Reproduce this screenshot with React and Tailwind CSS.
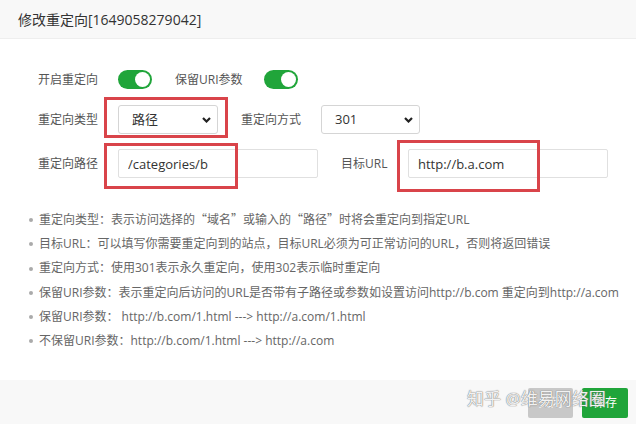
import React, { useState } from "react";

const font = { fontFamily: '"Open Sans", "Noto Sans CJK SC", sans-serif' };

const Toggle = ({ on, onChange }) => (
  <button
    type="button"
    onClick={() => onChange(!on)}
    className={`relative w-[34px] h-[19px] rounded-full ${on ? "bg-[#20a53a]" : "bg-[#ccc]"}`}
  >
    <span
      className={`absolute top-[2px] w-[15px] h-[15px] rounded-full bg-white ${on ? "left-[17px]" : "left-[2px]"}`}
    />
  </button>
);

const Chevron = () => (
  <svg width="9" height="6" viewBox="0 0 9 6" className="shrink-0">
    <path d="M1 1l3.5 3.5L8 1" fill="none" stroke="#222" strokeWidth="2.2" />
  </svg>
);

const Select = ({ value, width }) => (
  <div
    className={`flex items-center justify-between h-[29px] border border-[#d5d5d5] rounded-[3px] bg-white pl-[13px] pr-[6px] text-[13px] text-[#333] ${width}`}
  >
    <span>{value}</span>
    <Chevron />
  </div>
);

const Input = ({ value, onChange }) => (
  <input
    value={value}
    onChange={(e) => onChange(e.target.value)}
    className="w-[200px] h-[29px] border border-[#e0e0e0] rounded-[2px] px-[9px] text-[13px] text-[#333] outline-none"
  />
);

const notes = [
  "重定向类型：表示访问选择的“域名”或输入的“路径”时将会重定向到指定URL",
  "目标URL：可以填写你需要重定向到的站点，目标URL必须为可正常访问的URL，否则将返回错误",
  "重定向方式：使用301表示永久重定向，使用302表示临时重定向",
  "保留URI参数：表示重定向后访问的URL是否带有子路径或参数如设置访问http://b.com 重定向到http://a.com",
  "保留URI参数： http://b.com/1.html ---> http://a.com/1.html",
  "不保留URI参数：http://b.com/1.html ---> http://a.com",
];

// curly quotes should take the full CJK width, as in the original
const renderNote = (text) =>
  text.split(/([“”])/).map((part, i) =>
    part === "“" || part === "”" ? (
      <span key={i} className="inline-block w-[12px] text-center" style={{ fontFamily: '"Noto Sans CJK SC", sans-serif' }}>
        {part}
      </span>
    ) : (
      part
    )
  );

const App = () => {
  const [enabled, setEnabled] = useState(true);
  const [keepUri, setKeepUri] = useState(true);
  const [path, setPath] = useState("/categories/b");
  const [target, setTarget] = useState("http://b.a.com");

  return (
    <div className="relative w-[636px] h-[424px] bg-white overflow-hidden flex flex-col" style={font}>
      <div className="h-[39px] shrink-0 bg-[#f8f8f8] border-b border-[#eee] flex items-center pl-[18px] text-[14px] text-[#333]">
        修改重定向[1649058279042]
      </div>

      <div className="flex-1 pl-[38px] pt-[31px]">
        <div className="flex items-center h-[19px] text-[12px] text-[#555]">
          <span className="w-[80px]">开启重定向</span>
          <Toggle on={enabled} onChange={setEnabled} />
          <span className="ml-[23px] w-[89px]">保留URI参数</span>
          <Toggle on={keepUri} onChange={setKeepUri} />
        </div>

        <div className="flex items-center mt-[16px] text-[12px] text-[#555]">
          <span className="w-[80px]">重定向类型</span>
          <Select value="路径" width="w-[100px]" />
          <span className="ml-[23px] w-[80px]">重定向方式</span>
          <Select value="301" width="w-[99px]" />
        </div>

        <div className="flex items-center mt-[15px] text-[12px] text-[#555]">
          <span className="w-[80px]">重定向路径</span>
          <Input value={path} onChange={setPath} />
          <span className="ml-[23px] w-[67px]">目标URL</span>
          <Input value={target} onChange={setTarget} />
        </div>

        <ul className="mt-[29px] -ml-[9px] text-[12px] leading-[24.2px] text-[#666]">
          {notes.map((n) => (
            <li key={n} className="flex items-center whitespace-nowrap">
              <span className="w-[4px] h-[4px] rounded-full bg-[#aaa] mr-[6px] shrink-0" />
              <span>{renderNote(n)}</span>
            </li>
          ))}
        </ul>
      </div>

      <div className="h-[44px] shrink-0 bg-[#f8f8f8] flex items-center justify-end gap-[9px] pr-[8px] pt-[1px]">
        <button className="w-[45px] h-[30px] rounded-[2px] bg-[#c8c8c8] text-white text-[12px]">关闭</button>
        <button className="w-[46px] h-[30px] rounded-[2px] bg-[#20a53a] text-white text-[12px]">保存</button>
      </div>

      {/* annotation boxes */}
      <div className="absolute left-[104px] top-[97px] w-[124px] h-[41px] border-[3px] border-[#d9444a] pointer-events-none" />
      <div className="absolute left-[104px] top-[143px] w-[134px] h-[46px] border-[3px] border-[#d9444a] pointer-events-none" />
      <div className="absolute left-[397px] top-[140px] w-[143px] h-[52px] border-[3px] border-[#d9444a] pointer-events-none" />

      {/* watermark */}
      <div className="absolute left-[467px] top-[386px] text-[17px] text-white/90 pointer-events-none [text-shadow:0_0_1px_#777,0_0_1px_#777]">
        知乎 @维易网络圈
      </div>
    </div>
  );
};

export default App;
